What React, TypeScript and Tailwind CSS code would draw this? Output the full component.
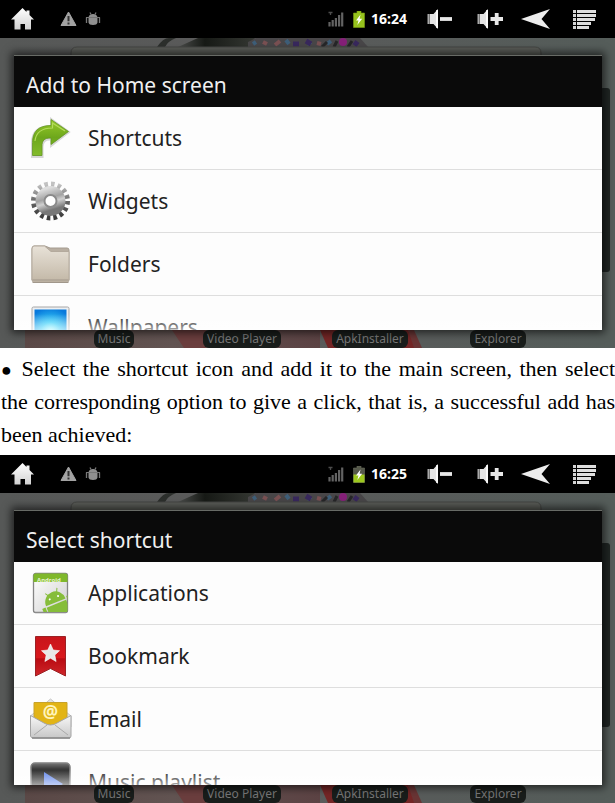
import type { ReactNode } from 'react';

type Item = { label: string; icon: ReactNode };

const apps = ['Music', 'Video Player', 'ApkInstaller', 'Explorer'];

/* Status bar icons */

function HomeIcon() {
    return (
        <svg width="24" height="24" viewBox="0 0 24 24">
            <defs>
                <linearGradient id="home" x1="0" y1="0" x2="0" y2="1">
                    <stop offset="0" stopColor="#ffffff" />
                    <stop offset="1" stopColor="#d2d2d2" />
                </linearGradient>
            </defs>
            <path d="M12.500 1 1 12.500h3.500V22.500h6v-5.500h4.500v5.500h6V12.500H24L19.500 8V3.500h-3V5Z" fill="url(#home)" />
        </svg>
    );
}

function WarningIcon() {
    return (
        <svg width="18" height="16" viewBox="0 0 18 16">
            <path d="M8.500 1 16 14.500H1Z" fill="#a3a3a3" stroke="#a3a3a3" strokeLinejoin="round" />
            <path d="M8.500 5v5.200M8.500 11.500v2" stroke="#333" strokeWidth="2" />
        </svg>
    );
}

function DebugIcon() {
    return (
        <svg width="16" height="14" viewBox="0 0 16 14">
            <path d="M3.500 5.500Q4 2 8 2T12.500 5.500ZM3.500 6h9v4.500Q12 13 8 13T3.500 10.500Z" fill="#909090" />
            <path d="m5 .5 1 2M11 .5l-1 2M1.500 5.500v5.500M14.500 5.500v5.500" fill="none" stroke="#777" strokeWidth="1.300" />
            <path d="M1 5.500h14" stroke="#777" />
        </svg>
    );
}

function SignalIcon() {
    return (
        <svg width="16" height="16" viewBox="0 0 16 16">
            <path d="M1.500 11v4.500M4.700 9v6.500M7.900 7v8.500M11.100 4v11.500M14.200 1.500v14" stroke="#626262" strokeWidth="2.200" />
            <path d="M.5 1.500h4M2.500 1v3" stroke="#4c4c4c" strokeWidth="1.300" />
        </svg>
    );
}

function BatteryIcon({ full }: { full: boolean }) {
    return (
        <svg width="12" height="17" viewBox="0 0 12 17">
            <path d="M4 0h4v2h3.500v14.500H.5V2H4Z" fill={full ? '#96c21d' : '#55584a'} stroke={full ? '#7a9e12' : '#6a6d5c'} strokeWidth=".6" />
            {!full && <path d="M.5 8.500h11v8H.5Z" fill="#9dc81e" />}
            <path d="M7.500 3.500 3 9.500h2.500L4.300 14 9.200 7.700H6.600Z" fill="#fff" />
        </svg>
    );
}

function VolumeIcon({ up }: { up?: boolean }) {
    return (
        <svg width="26" height="22" viewBox="0 0 26 22">
            <path d="M.5 6h2.200v10H.5Z" fill="#aaa" />
            <path d="M3 6h3.500L11 1v20L6.500 16H3Z" fill="#e2e2e2" />
            <path d="M10 2v18" stroke="#fff" strokeWidth="1.500" />
            <path d={up ? 'M13.500 11H26M19.700 5v12' : 'M13 11H25'} stroke="#e8e8e8" strokeWidth="3.800" />
        </svg>
    );
}

function BackIcon() {
    return (
        <svg width="30" height="20" viewBox="0 0 30 20">
            <path d="M0 10 29 0 20.500 10 29 20Z" fill="#ededed" />
        </svg>
    );
}

function MenuIcon() {
    return (
        <svg width="23" height="19" viewBox="0 0 23 19">
            <path d="M0 1.500h3M0 5.500h3M0 9.500h3M0 13.500h3M0 17.500h3" stroke="#d4d4d4" strokeWidth="2.800" />
            <path d="M4 1.500H23M4 5.500H23M4 9.500h18M4 13.500h14M4 17.500h12" stroke="#dedede" strokeWidth="2.800" />
        </svg>
    );
}

/* List icons */

function ShortcutIcon() {
    return (
        <svg width="42" height="42" viewBox="0 0 42 42">
            <defs>
                <linearGradient id="arrow" x1="0" y1="0" x2="0" y2="1">
                    <stop offset="0" stopColor="#98ca2a" />
                    <stop offset=".5" stopColor="#6da71b" />
                    <stop offset="1" stopColor="#83bb2c" />
                </linearGradient>
            </defs>
            <path d="M2 40V26C2 15 8 9 21 9V2L39 15 21 29v-6.500C15 22 12.500 25 12.500 30v10Z" fill="#aaa" stroke="#d6d6d6" strokeWidth="2" />
            <path d="M2.500 38.500V25.500C2.500 15 8 8.500 21 8.500V2.500L38.500 14.500 21 27.500v-6.500C14 20.500 12 24 12 29v9.500Z" fill="url(#arrow)" stroke="#649922" strokeWidth=".8" />
            <path d="M5 24C6 15 12 11 22.500 11V6L35 14" fill="none" stroke="#b4dc5c" strokeWidth="1.200" />
        </svg>
    );
}

function GearIcon() {
    return (
        <svg width="42" height="42" viewBox="0 0 42 42">
            <defs>
                <linearGradient id="gear" x1="0" y1="0" x2=".3" y2="1">
                    <stop offset="0" stopColor="#dedede" />
                    <stop offset=".45" stopColor="#a2a2a2" />
                    <stop offset=".65" stopColor="#d0d0d0" />
                    <stop offset="1" stopColor="#777" />
                </linearGradient>
                <linearGradient id="teeth" x1="0" y1="0" x2="0" y2="1">
                    <stop offset="0" stopColor="#c2c2c2" />
                    <stop offset=".5" stopColor="#666" />
                    <stop offset="1" stopColor="#3b3b3b" />
                </linearGradient>
            </defs>
            <circle cx="20.500" cy="21" r="16.500" fill="none" stroke="url(#teeth)" strokeWidth="6" strokeDasharray="3.480 3" />
            <circle cx="20.500" cy="21" r="10.500" fill="none" stroke="url(#gear)" strokeWidth="9" />
            <circle cx="20.500" cy="21" r="6" fill="#fff" stroke="#8b8b8b" strokeWidth="2" />
        </svg>
    );
}

function FolderIcon() {
    return (
        <svg width="42" height="42" viewBox="0 0 42 42">
            <defs>
                <linearGradient id="folder" x1="0" y1="0" x2="0" y2="1">
                    <stop offset="0" stopColor="#e8e2d8" />
                    <stop offset="1" stopColor="#c2b7a6" />
                </linearGradient>
            </defs>
            <path d="M2 6Q2 3 4 3H15L20 5H37Q39 5 39 7V37H2Z" fill="#b9afa2" stroke="#a59c90" />
            <path d="M2 6Q2 3 4 3H14.500L21 8.500H39V37Q39 39 37 39H4Q2 39 2 37Z" fill="url(#folder)" stroke="#b4aa9d" />
            <path d="M2.500 37h36M2.500 39.500h36" stroke="#a0978b" />
        </svg>
    );
}

function PictureIcon() {
    return (
        <svg width="42" height="42" viewBox="0 0 42 42">
            <defs>
                <radialGradient id="sky" cx=".5" cy=".7" r=".75">
                    <stop offset="0" stopColor="#b8ffff" />
                    <stop offset=".4" stopColor="#37cdf8" />
                    <stop offset="1" stopColor="#0879dc" />
                </radialGradient>
            </defs>
            <rect x="2" y="1" width="37" height="38" rx="1.500" fill="#eceff2" stroke="#a7a7a7" />
            <rect x="4.500" y="3.500" width="32" height="32" fill="url(#sky)" />
        </svg>
    );
}

function ApplicationsIcon() {
    return (
        <svg width="42" height="42" viewBox="0 0 42 42">
            <defs>
                <linearGradient id="sheet" x1="0" y1="0" x2="1" y2="1">
                    <stop offset="0" stopColor="#ffffff" />
                    <stop offset="1" stopColor="#cfcfcf" />
                </linearGradient>
                <clipPath id="page">
                    <rect x="3.500" y="1.500" width="34" height="39" rx="2" />
                </clipPath>
            </defs>
            <rect x="3.500" y="1.500" width="34" height="39" rx="2" fill="url(#sheet)" stroke="#858585" strokeWidth="1.300" />
            <g clipPath="url(#page)">
                <path d="M3 1h36v9H3Z" fill="#7fb82b" />
                <text x="7" y="10" fontSize="6" fontWeight="bold" fill="#e6f4cc" fontFamily="Noto Sans">Android</text>
                <g fill="#86bd3a" transform="rotate(-22 27 32)">
                    <path d="M16 30a10.500 11 0 0 1 21 0ZM16 31.500h21v12H16ZM11.500 31h3.500v11h-3.500ZM38.500 28h3v10h-3Z" />
                    <path d="m20 18 2.500 4M33 17l-2 4" stroke="#86bd3a" />
                    <circle cx="22" cy="25" r="1" fill="#fff" />
                    <circle cx="31" cy="25" r="1" fill="#fff" />
                </g>
            </g>
            <path d="M4 40.500h33" stroke="#8b8b8b" />
        </svg>
    );
}

function BookmarkIcon() {
    return (
        <svg width="42" height="42" viewBox="0 0 42 42">
            <defs>
                <linearGradient id="ribbon" x1="0" y1="0" x2="0" y2="1">
                    <stop offset="0" stopColor="#c8151b" />
                    <stop offset=".55" stopColor="#d9181d" />
                    <stop offset=".56" stopColor="#b90b12" />
                    <stop offset="1" stopColor="#cf262a" />
                </linearGradient>
            </defs>
            <path d="M5.500 1.500h30V41L20.500 33.500 5.500 41Z" fill="url(#ribbon)" stroke="#9b2225" />
            <path d="m20.500 9 2.700 6 6.300.7-4.700 4.300 1.300 6.500-5.600-3.300-5.600 3.300 1.300-6.500-4.700-4.300 6.300-.7Z" fill="#e8e8e8" stroke="#fff" strokeWidth=".6" />
        </svg>
    );
}

function EmailIcon() {
    return (
        <svg width="42" height="42" viewBox="0 0 42 42">
            <defs>
                <linearGradient id="envelope" x1="0" y1="0" x2="0" y2="1">
                    <stop offset="0" stopColor="#f7f7f7" />
                    <stop offset="1" stopColor="#c7c7c7" />
                </linearGradient>
            </defs>
            <path d="M.5 18 20.500 1 41 18V29H.5Z" fill="#e2e2e2" stroke="#c4c4c4" />
            <path d="M4 4.500h33V24L20.500 33 4 24Z" fill="#e2b416" stroke="#c7a22b" />
            <text x="20.500" y="20" fontSize="17" fontWeight="bold" textAnchor="middle" fill="#fff4bd" fontFamily="Noto Sans">@</text>
            <path d="M.5 17.500 14 25q6.500 4 13 0L41 17.500V38q0 2-2 2h-36q-2 0-2.500-2Z" fill="url(#envelope)" stroke="#a4a4a4" />
            <path d="m4 37 13-10M38 37 25 27" stroke="#aaa" />
            <path d="M2 40h38" stroke="#888" strokeWidth="1.500" />
        </svg>
    );
}

function PlaylistIcon() {
    return (
        <svg width="42" height="42" viewBox="0 0 42 42">
            <defs>
                <linearGradient id="tile" x1="0" y1="0" x2="0" y2="1">
                    <stop offset="0" stopColor="#777" />
                    <stop offset=".2" stopColor="#2b2b2b" />
                    <stop offset="1" stopColor="#111" />
                </linearGradient>
            </defs>
            <rect x="1" y="2" width="39" height="38" rx="4" fill="url(#tile)" stroke="#808080" strokeWidth="1.500" />
            <path d="M14 11 33 23 14 35Z" fill="#5f84e8" />
        </svg>
    );
}

const homeItems: Item[] = [
    { label: 'Shortcuts', icon: <ShortcutIcon /> },
    { label: 'Widgets', icon: <GearIcon /> },
    { label: 'Folders', icon: <FolderIcon /> },
    { label: 'Wallpapers', icon: <PictureIcon /> },
];

const shortcutItems: Item[] = [
    { label: 'Applications', icon: <ApplicationsIcon /> },
    { label: 'Bookmark', icon: <BookmarkIcon /> },
    { label: 'Email', icon: <EmailIcon /> },
    { label: 'Music playlist', icon: <PlaylistIcon /> },
];

function StatusBar({ time, full }: { time: string; full: boolean }) {
    return (
        <header className="flex h-[38px] items-center bg-black pl-[10px] pr-[19px]">
            <button aria-label="Home"><HomeIcon /></button>
            <div className="ml-[26px] flex items-center gap-[7px]">
                <WarningIcon />
                <DebugIcon />
            </div>
            <div className="ml-auto flex items-center gap-[9px]">
                <SignalIcon />
                <BatteryIcon full={full} />
            </div>
            <time className="ml-1 w-10 text-center text-sm font-bold text-white">{time}</time>
            <div className="ml-[18px] flex items-center gap-6">
                <button aria-label="Volume down"><VolumeIcon /></button>
                <button aria-label="Volume up"><VolumeIcon up /></button>
            </div>
            <div className="ml-[18px] flex items-center gap-[22px]">
                <button aria-label="Back"><BackIcon /></button>
                <button aria-label="Menu"><MenuIcon /></button>
            </div>
        </header>
    );
}

// Dimmed home screen behind the dialog
function Wallpaper() {
    return (
        <svg className="absolute inset-0 h-full w-full" viewBox="0 0 615 310" preserveAspectRatio="none" aria-hidden="true">
            <defs>
                <linearGradient id="wall" x1="0" y1="0" x2="1" y2="0">
                    <stop offset="0" stopColor="#575958" />
                    <stop offset=".4" stopColor="#5b5b5b" />
                    <stop offset="1" stopColor="#555d5a" />
                </linearGradient>
                <linearGradient id="pink" x1="0" y1="0" x2="1" y2="0">
                    <stop offset="0" stopColor="#5b4947" />
                    <stop offset=".5" stopColor="#625452" />
                    <stop offset="1" stopColor="#5c4344" />
                </linearGradient>
                <linearGradient id="lash" x1="0" y1="0" x2="1" y2="0">
                    <stop offset="0" stopColor="#4c4e4c" />
                    <stop offset=".35" stopColor="#171a16" />
                    <stop offset="1" stopColor="#353833" />
                </linearGradient>
            </defs>
            <path d="M0 0h615v310H0Z" fill="url(#wall)" />
            <path d="M157 9q6-9 12-9h7q-8 3-11 9Z" fill="#2c2f2c" />
            <path d="M178 9 198 0h57l-7 9Z" fill="url(#lash)" />
            <path d="M248 9V4l8-4h104l8 9Z" fill="#484648" />
            <path d="M253 6l3-2M286 2l3 4M307 6l4-2M327 6l4-3" stroke="#3e5e78" strokeWidth="4" />
            <path d="M263 4l4 2M275 7l5-4M317 5l4 1" stroke="#795052" strokeWidth="4" />
            <path d="M293 6h6M306 3l5 3M354 4l4 3" stroke="#38285c" strokeWidth="5" />
            <circle cx="343" cy="4" r="4" fill="#852078" />
            <path d="M322 9l5-5M334 9l3-6M348 9l4-6" stroke="#262628" strokeWidth="3" />
            <path d="M71 20v-5q0-6 6-6h458q6 0 6 6v5" fill="#5c5e59" stroke="#454744" />
            <rect x="600" y="50" width="10" height="184" rx="3" fill="#202624" />
            <path d="M25 286h295v24H25Z" fill="url(#pink)" />
            <path d="M172 292h34v18h-22Z" fill="#6b3e3e" />
            <path d="M320 292h88q4 8 8 18h-88Z" fill="#742626" />
            <path d="M408 292h6l8 18h-8Z" fill="#6a3535" />
        </svg>
    );
}

function Screen({ title, time, full, items }: { title: string; time: string; full: boolean; items: Item[] }) {
    return (
        <section className="font-['Noto_Sans',sans-serif]">
            <StatusBar time={time} full={full} />
            <div className="relative overflow-hidden pt-[17px]">
                <Wallpaper />
                <div className="relative z-10 mr-[13px] ml-[14px] flex h-[275px] flex-col overflow-hidden shadow-[0_0_8px_3px_rgba(0,0,0,0.6)]">
                    <h2 className="flex h-[52px] shrink-0 items-center border-t border-[#686b66] bg-[#0a0a0a] px-3 pt-2 text-[21px] text-[#f0f0f0]">
                        {title}
                    </h2>
                    <ul className="flex-1 overflow-hidden bg-[#fdfdfd]">
                        {items.map((item) => (
                            <li key={item.label} className="border-b border-[#dedede]">
                                <button className="flex h-[62px] w-full items-center gap-4 px-4 text-left text-[21px] text-[#222]">
                                    {item.icon}
                                    <span className="pt-[2px]">{item.label}</span>
                                </button>
                            </li>
                        ))}
                    </ul>
                    <div className="pointer-events-none absolute inset-x-0 bottom-0 h-4 bg-linear-to-b from-transparent to-white/60" />
                </div>
                <div className="relative grid h-[18px] grid-cols-4 justify-items-center pr-[53px] pl-[50px]">
                    {apps.map((app) => (
                        <span key={app} className="h-[18px] rounded-md bg-[#191d1b] px-1 text-xs leading-[18px] whitespace-nowrap text-[#777]">
                            {app}
                        </span>
                    ))}
                </div>
            </div>
        </section>
    );
}

export default function App() {
    return (
        <main className="bg-white">
            <Screen title="Add to Home screen" time="16:24" full items={homeItems} />
            <p className="py-1 pl-px text-justify font-['Liberation_Serif',serif] text-[22px] leading-[33px] text-black">
                <span className="text-lg leading-none">●</span> Select the shortcut icon and add it to the main screen, then select the corresponding option to give a click, that is, a successful add has been achieved:
            </p>
            <Screen title="Select shortcut" time="16:25" full={false} items={shortcutItems} />
        </main>
    );
}
